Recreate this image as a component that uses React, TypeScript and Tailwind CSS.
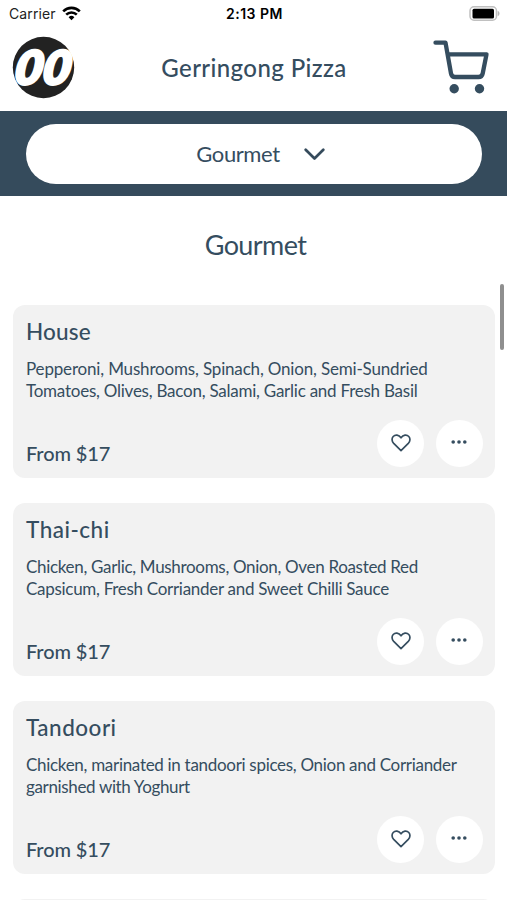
const items = [
  {
    name: "House",
    nameClass: "tracking-[0.2px]",
    lines: [
      { text: "Pepperoni, Mushrooms, Spinach, Onion, Semi-Sundried", className: "tracking-[-0.17px]" },
      { text: "Tomatoes, Olives, Bacon, Salami, Garlic and Fresh Basil", className: "tracking-[-0.24px]" },
    ],
  },
  {
    name: "Thai-chi",
    nameClass: "tracking-[0.5px]",
    lines: [
      { text: "Chicken, Garlic, Mushrooms, Onion, Oven Roasted Red", className: "tracking-[-0.32px]" },
      { text: "Capsicum, Fresh Corriander and Sweet Chilli Sauce", className: "tracking-[-0.29px]" },
    ],
  },
  {
    name: "Tandoori",
    nameClass: "tracking-[0.5px]",
    lines: [
      { text: "Chicken, marinated in tandoori spices, Onion and Corriander", className: "tracking-[-0.3px]" },
      { text: "garnished with Yoghurt", className: "tracking-[-0.35px]" },
    ],
  },
];

const StatusBar = () => {
  return (
    <div className="grid h-[27px] grid-cols-3 items-center pl-[9px] pr-[7px] font-['Inter',sans-serif] text-black">
      <div className="flex items-center gap-[6px]">
        <span className="text-[14px] tracking-[0.1px] text-[#222]">Carrier</span>
        <svg width="19" height="15" viewBox="0 0 19 15" fill="none" stroke="#000" strokeWidth="2.6">
          <path d="M1.2 5.3a11.8 11.8 0 0 1 16.6 0" />
          <path d="M4.2 8.6a7.6 7.6 0 0 1 10.6 0" />
          <path d="M9.5 14.2 6.6 11.2a4.1 4.1 0 0 1 5.8 0Z" fill="#000" stroke="none" />
        </svg>
      </div>
      <span className="text-center text-[14px] font-semibold tracking-[0.5px]">2:13 PM</span>
      <svg className="justify-self-end" width="31" height="15" viewBox="0 0 31 15">
        <rect x="1" y="0.75" width="26.5" height="13.5" rx="4" fill="#fff" stroke="#c0c0c0" strokeWidth="1.5" />
        <rect x="3.5" y="2.7" width="21.5" height="9.8" rx="1.5" fill="#000" />
        <path d="M28.7 5c2.4.6 2.4 4.4 0 5Z" fill="#b8b8b8" />
      </svg>
    </div>
  );
};

const Header = () => {
  return (
    <header className="flex h-[84px] items-center justify-between pb-[3px] pl-[12px] pr-[17px]">
      <svg className="overflow-visible" width="63" height="63" viewBox="0 0 63 63">
        <circle cx="31.5" cy="31.5" r="30.7" fill="#222" />
        <g transform="translate(3.6 48) skewX(-9)">
          <text
            x="-2.5"
            y="0"
            textLength="56"
            lengthAdjust="spacingAndGlyphs"
            fontFamily="Lato, sans-serif"
            fontWeight="900"
            fontStyle="italic"
            fontSize="46"
            fill="#fff"
            stroke="#fff"
            strokeWidth="3"
            strokeLinejoin="round"
          >
            00
          </text>
        </g>
      </svg>
      <h1 className="text-[24px] font-medium tracking-[0.4px]">Gerringong Pizza</h1>
      <svg className="-mt-[2px]" width="57" height="56" viewBox="433 39 57 56" fill="none" stroke="#354d5f" strokeWidth="4.3" strokeLinecap="round" strokeLinejoin="round">
        <path d="M435.5 42.7H445.5L451 73.5Q451.7 77 455 77H478.5Q482 77 482.7 73.5L486.500 54.300H448" />
        <circle cx="454.2" cy="88.7" r="4.7" fill="#354d5f" stroke="none" />
        <circle cx="479.5" cy="88.7" r="4.7" fill="#354d5f" stroke="none" />
      </svg>
    </header>
  );
};

const App = () => {
  return (
    <div className="relative h-[900px] w-[507px] overflow-hidden bg-white font-['Lato',sans-serif] text-[#354d5f]">
      <StatusBar />
      <Header />

      {/* Category select */}
      <div className="h-[85px] bg-[#354b5c] pl-[26px] pr-[25px] pt-[13px]">
        <button className="flex h-[60px] w-full items-center justify-center gap-[24px] rounded-full bg-white pl-[13px]">
          <span className="-mt-[2px] text-[22px] tracking-[-0.4px]">Gourmet</span>
          <svg width="21" height="13" viewBox="0 0 21 13" fill="none" stroke="#354b5c" strokeWidth="2.7" strokeLinecap="round" strokeLinejoin="round">
            <path d="M1.7 1.7 10.5 10.5 19.3 1.7" />
          </svg>
        </button>
      </div>

      <h2 className="mt-[29px] pl-[4px] text-center text-[27px] leading-[40px] tracking-[-0.6px]">Gourmet</h2>

      {/* Menu */}
      <div className="mt-[40px] flex flex-col gap-[25px] pl-[13px] pr-[12px]">
        {items.map((item) => (
          <article key={item.name} className="flex h-[173px] shrink-0 flex-col rounded-[12px] bg-[#f2f2f2] pl-[13px] pr-[12px]">
            <h3 className={`mt-[11.5px] text-[22.5px] font-medium leading-[30px] ${item.nameClass}`}>{item.name}</h3>
            <p className="mt-[11.5px] text-[17px] leading-[22px]">
              {item.lines.map((line) => (
                <span key={line.text} className={`block whitespace-nowrap ${line.className}`}>{line.text}</span>
              ))}
            </p>
            <div className="mt-[18px] flex justify-between">
              <span className="mt-[19px] text-[20px] font-medium leading-[28px] tracking-[-0.1px]">From $17</span>
              <div className="flex gap-[12px]">
                <button className="flex size-[47px] items-center justify-center rounded-full bg-white pb-[2px]">
                  <svg width="22" height="20" viewBox="0 0 22 20" fill="none" stroke="#354d5f" strokeWidth="1.7" strokeLinejoin="round">
                    <path d="M11 17.7 3.7 10.4C1.6 8.2 1.6 5.1 3.2 3.5 5.2 1.5 8.8 1.6 11 4.800 13.2 1.6 16.8 1.5 18.8 3.5 20.4 5.1 20.4 8.2 18.3 10.4Z" />
                  </svg>
                </button>
                <button className="flex size-[47px] items-center justify-center rounded-full bg-white pb-[3px] pr-[1px]">
                  <svg width="16" height="4" viewBox="0 0 16 4" fill="#354d5f">
                    <circle cx="2.2" cy="2" r="1.8" />
                    <circle cx="8" cy="2" r="1.8" />
                    <circle cx="13.8" cy="2" r="1.8" />
                  </svg>
                </button>
              </div>
            </div>
          </article>
        ))}
        <div className="h-[173px] shrink-0 rounded-[12px] bg-[#f2f2f2]" />
      </div>

      {/* Scroll indicator */}
      <div className="absolute right-[3px] top-[284px] h-[66px] w-[4px] rounded-full bg-[#8f8f8f]" />
    </div>
  );
};

export default App;
